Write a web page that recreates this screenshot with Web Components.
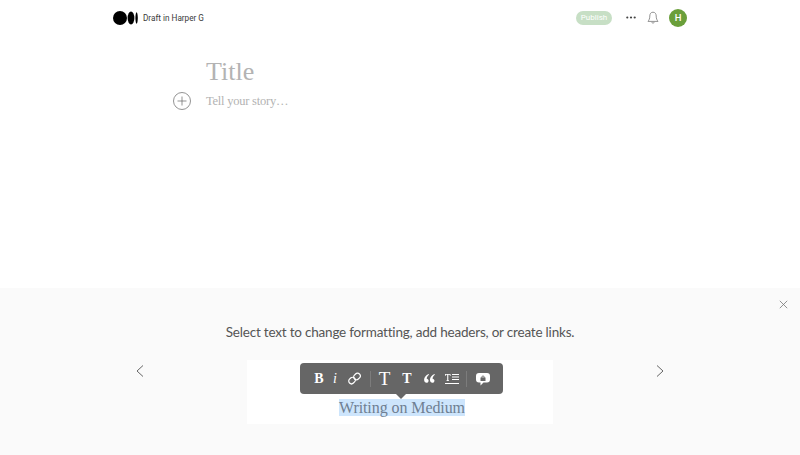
<!doctype html>
<html lang="en">
<head>
<meta charset="utf-8">
<title>Draft in Harper G</title>
<style>
	html, body { margin: 0; height: 100%; background: #fff; overflow: hidden; }
	body { display: flex; flex-direction: column; height: 455px; }
</style>
</head>
<body>
<md-header author="Harper G" initial="H"></md-header>
<md-editor></md-editor>
<md-tip-panel message="Select text to change formatting, add headers, or create links.">
	<md-format-bar></md-format-bar>
	<span>Writing on Medium</span>
</md-tip-panel>

<script>
class MdHeader extends HTMLElement {
	connectedCallback() {
		this.attachShadow({ mode: "open" }).innerHTML = `
			<style>
				:host {
					display: flex;
					align-items: center;
					height: 35px;
					padding: 0 113px;
					font-family: Roboto, "Liberation Sans", sans-serif;
				}
				.logo { width: 25px; height: 14px; display: block; }
				.draft { margin-left: 5px; font-size: 8.2px; color: #3a3a3a; }
				.right { margin-left: auto; display: flex; align-items: center; }
				.publish {
					width: 36px; height: 14px; border-radius: 7px; background: #c7dfc5;
					color: #fff; font-size: 8px; line-height: 14px; text-align: center;
				}
				.dots { margin-left: 14px; width: 10px; height: 3px; display: block; }
				.bell { margin-left: 11px; width: 12px; height: 14px; display: block; }
				.avatar {
					margin-left: 10px; width: 18px; height: 18px; border-radius: 50%;
					background: #6a9f3a; color: #fff; font-size: 9.5px; font-weight: 500;
					line-height: 18px; text-align: center;
				}
			</style>
			<svg class="logo" viewBox="0 0 25 14"><ellipse cx="7" cy="7" rx="7" ry="7"/><ellipse cx="18" cy="7" rx="3.4" ry="6.5"/><ellipse cx="23.6" cy="7" rx="1.2" ry="5.8"/></svg>
			<span class="draft">Draft in ${this.getAttribute("author")}</span>
			<div class="right">
				<span class="publish">Publish</span>
				<svg class="dots" viewBox="0 0 10 3" fill="#444"><circle cx="1.3" cy="1.5" r="1.1"/><circle cx="5" cy="1.5" r="1.1"/><circle cx="8.7" cy="1.5" r="1.1"/></svg>
				<svg class="bell" viewBox="0 0 12 14" fill="none" stroke="#777" stroke-width=".8"><path d="M6 1.2C3.8 1.2 2.8 3 2.8 5c0 2.800-.8 4-1.800 5.400h10C10 9 9.200 7.800 9.200 5c0-2-1-3.800-3.200-3.800z"/><path d="M4.800 11.200c.2 1.300 2.200 1.300 2.400 0"/></svg>
				<span class="avatar">${this.getAttribute("initial")}</span>
			</div>
		`;
	}
}

class MdEditor extends HTMLElement {
	connectedCallback() {
		this.attachShadow({ mode: "open" }).innerHTML = `
			<style>
				:host {
					display: grid;
					flex: 1;
					grid-template-columns: 173px 18px 15px auto;
					grid-template-rows: auto auto;
					align-content: start;
					font-family: "Liberation Serif", serif;
				}
				.title {
					grid-column: 4; margin-top: 20px; height: 37px;
					font-size: 26px; line-height: 34px; color: #b3b3b3;
				}
				.plus { grid-column: 2; grid-row: 2; width: 18px; height: 18px; display: block; }
				.story { grid-column: 4; grid-row: 2; font-size: 12.5px; letter-spacing: -.23px; line-height: 18px; color: #b3b3b3; }
			</style>
			<div class="title">Title</div>
			<svg class="plus" viewBox="0 0 18 18" fill="none" stroke="#666" stroke-width=".7"><circle cx="9" cy="9" r="8.500"/><path d="M9 4.500v9M4.500 9h9"/></svg>
			<div class="story">Tell your story…</div>
		`;
	}
}

class MdTipPanel extends HTMLElement {
	connectedCallback() {
		this.attachShadow({ mode: "open" }).innerHTML = `
			<style>
				:host {
					display: block;
					position: relative;
					height: 167px;
					box-sizing: border-box;
					padding-top: 35px;
					background: #fafafa;
					font-family: Lato, "Open Sans", sans-serif;
				}
				.message { text-align: center; font-size: 13.5px; letter-spacing: -.2px; line-height: 18px; color: #555; }
				.row {
					display: grid;
					grid-template-columns: 12px 306px 12px;
					justify-content: space-between;
					align-items: start;
					margin: 19px 134px 0;
				}
				.demo {
					position: relative;
					height: 64px;
					background: #fff;
					display: flex;
					align-items: flex-end;
					justify-content: center;
					padding: 0 0 8px 4px;
					box-sizing: border-box;
					font: 16px/17px "Liberation Serif", serif;
					color: #6f7f92;
				}
				::slotted(span) { background: #cde5fc; letter-spacing: -.08px; }
				.arrow { width: 12px; height: 16px; display: block; margin-top: 3px; }
				.close { position: absolute; top: 12px; right: 12px; width: 9px; height: 9px; display: block; }
			</style>
			<svg class="close" viewBox="0 0 9 9" stroke="#777" stroke-width=".8"><path d="M.8.8l7.400 7.400M8.200.8L.8 8.200"/></svg>
			<div class="message">${this.getAttribute("message")}</div>
			<div class="row">
				<svg class="arrow" viewBox="0 0 12 16" fill="none" stroke="#666"><path d="M9 2.500L3 8l6 5.500"/></svg>
				<div class="demo"><slot></slot></div>
				<svg class="arrow" viewBox="0 0 12 16" fill="none" stroke="#666"><path d="M3 2.500L9 8l-6 5.500"/></svg>
			</div>
		`;
	}
}

class MdFormatBar extends HTMLElement {
	connectedCallback() {
		this.attachShadow({ mode: "open" }).innerHTML = `
			<style>
				:host {
					display: flex;
					align-items: center;
					position: absolute;
					left: 53px;
					top: 3px;
					width: 203px;
					height: 31px;
					box-sizing: border-box;
					padding-left: 14px;
					border-radius: 4px;
					background: #666;
					color: #fff;
					font-family: "Liberation Serif", serif;
				}
				:host::after {
					content: "";
					position: absolute;
					left: 96px;
					bottom: -5px;
					border: 5px solid transparent;
					border-bottom: 0;
					border-top-color: #666;
				}
				span { display: block; text-align: center; font-weight: 700; line-height: 31px; }
				.b { width: 10px; font-size: 14px; }
				.i { width: 6px; margin-left: 8px; font-size: 14px; font-style: italic; font-weight: 400; }
				.sep { width: 1px; height: 16px; background: #7c7c7c; }
				.big { width: 13px; font-size: 19px; font-weight: 400; margin-left: 7px; }
				.small { width: 10px; font-size: 14px; margin-left: 11px; }
				svg { display: block; }
			</style>
			<span class="b">B</span>
			<span class="i">i</span>
			<svg style="margin-left:10px" width="13" height="13" viewBox="0 0 13 13" fill="none" stroke="#fff" stroke-width="1.200"><rect x="6.200" y="1" width="5.500" height="7" rx="2.700" transform="rotate(45 9 4.500)"/><rect x="1.300" y="5" width="5.500" height="7" rx="2.700" transform="rotate(45 4 8.500)"/></svg>
			<div class="sep" style="margin-left:9px"></div>
			<span class="big">T</span>
			<span class="small">T</span>
			<svg style="margin-left:11px" width="13" height="9" viewBox="0 0 13 10" fill="#fff"><path d="M5.500 0C2.500 1.500.5 3.500.5 6.500c0 2 1.200 3.300 2.700 3.300 1.300 0 2.300-1 2.300-2.300S4.600 5.300 3.400 5.200C3.500 3.500 4.500 2 6 .8zM12 0C9 1.500 7 3.500 7 6.500c0 2 1.200 3.300 2.700 3.300 1.300 0 2.300-1 2.300-2.300s-.9-2.200-2.100-2.300C10 3.500 11 2 12.500.8z"/></svg>
			<svg style="margin-left:9px" width="14" height="12" viewBox="0 0 14 12" fill="#fff"><path d="M0 1h5.500v2H5L4.700 1.800H3.300v5.400H4V8H1.500v-.8h.7V1.800H.8L.5 3H0z"/><path d="M7 1h7v1H7zM7 3.500h7v1H7zM7 6h7v1H7zM0 10h14v1H0z"/></svg>
			<div class="sep" style="margin-left:7px"></div>
			<svg style="margin-left:9px" width="14" height="14" viewBox="0 0 14 14"><path fill="#fff" d="M3 1h8a3 3 0 0 1 3 3v3.500a3 3 0 0 1-3 3H7.500L4.500 13.500V10.500H3a3 3 0 0 1-3-3V4a3 3 0 0 1 3-3z"/><path fill="#666" d="M4.500 5.500h5v3.500h-5zM5.500 5.500V5a1.500 1.500 0 0 1 3 0v.5h-.8V5a.7.7 0 0 0-1.400 0v.5z"/></svg>
		`;
	}
}

customElements.define("md-header", MdHeader);
customElements.define("md-editor", MdEditor);
customElements.define("md-tip-panel", MdTipPanel);
customElements.define("md-format-bar", MdFormatBar);
</script>
</body>
</html>
